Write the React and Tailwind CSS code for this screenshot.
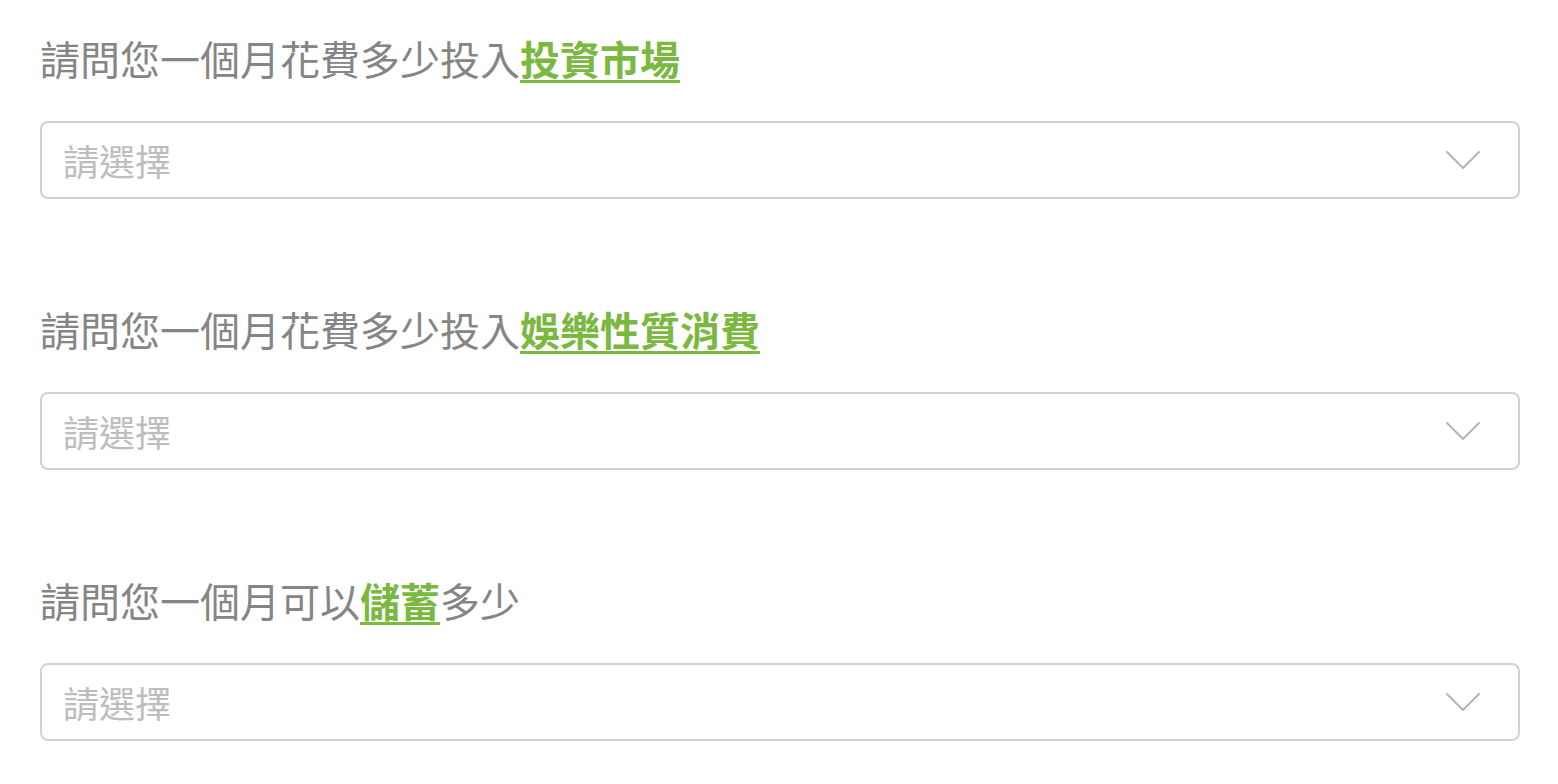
import React from "react";

const font = {
  fontFamily: '"Noto Sans CJK TC", "Noto Sans", sans-serif',
};

const Question = ({ before, highlight, after }) => {
  return (
    <div className="pb-[102px] last:pb-[43px]">
      <h2 className="h-[56px] flex items-center text-[40px] leading-none text-[#858585] font-normal">
        <span>{before}</span>
        <span className="font-bold text-[#7ab840] underline decoration-[3px] underline-offset-[5px]">
          {highlight}
        </span>
        {after && <span>{after}</span>}
      </h2>
      <div className="mt-[35px] h-[78px] border-2 border-[#d2d2d2] rounded-lg flex items-center justify-between pl-[21px] pr-[38px] bg-white">
        <span className="text-[36px] leading-none text-[#bdbdbd]">請選擇</span>
        <svg width="34" height="20" viewBox="0 0 34 20" fill="none">
          <path
            d="M1 2 L17 18 L33 2"
            stroke="#b5b5b5"
            strokeWidth="2"
            strokeLinecap="round"
            strokeLinejoin="round"
          />
        </svg>
      </div>
    </div>
  );
};

export default function App() {
  return (
    <div className="bg-white px-[40px] pt-[30px] w-[1558px]" style={font}>
      <div className="w-[1480px]">
        <Question before="請問您一個月花費多少投入" highlight="投資市場" />
        <Question before="請問您一個月花費多少投入" highlight="娛樂性質消費" />
        <Question before="請問您一個月可以" highlight="儲蓄" after="多少" />
      </div>
    </div>
  );
}
